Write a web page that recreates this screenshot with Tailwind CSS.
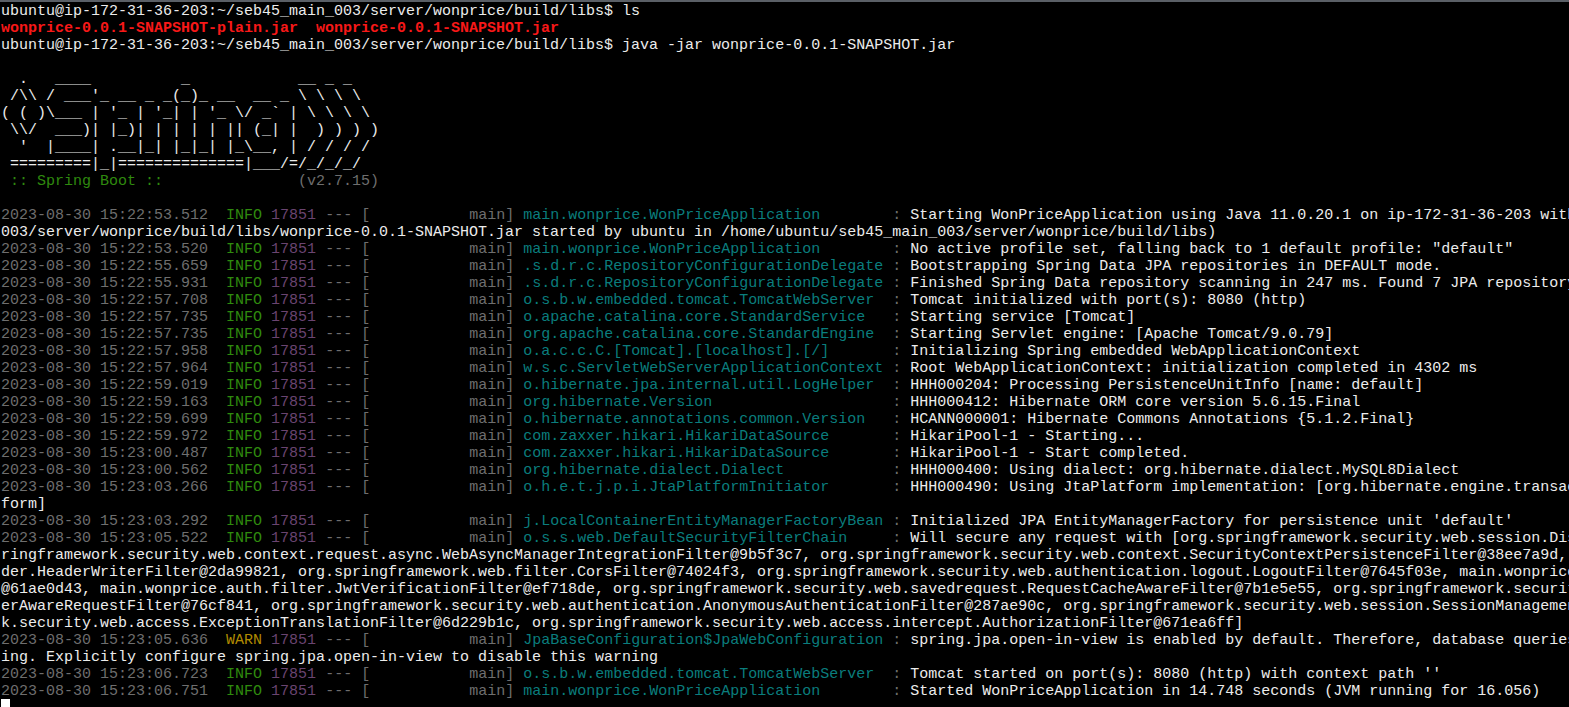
<!DOCTYPE html>
<html lang="en">
<head>
  <meta charset="UTF-8" />
  <title>ubuntu@ip-172-31-36-203</title>
  <script src="https://cdn.jsdelivr.net/npm/@tailwindcss/browser@4"></script>
</head>
<body class="bg-black overflow-hidden">
  <div class="h-[707px] w-[1569px] overflow-hidden bg-black border-t-2 border-t-[#5a5f66] pt-px pl-px font-['Liberation_Mono',monospace] text-[15px] leading-[17px] text-[#ececec]">
    <!-- shell -->
    <div class="whitespace-pre">ubuntu@ip-172-31-36-203:~/seb45_main_003/server/wonprice/build/libs$ ls</div>
    <div class="whitespace-pre font-bold text-[#f81818]">wonprice-0.0.1-SNAPSHOT-plain.jar  wonprice-0.0.1-SNAPSHOT.jar</div>
    <div class="whitespace-pre">ubuntu@ip-172-31-36-203:~/seb45_main_003/server/wonprice/build/libs$ java -jar wonprice-0.0.1-SNAPSHOT.jar</div>
    <div class="whitespace-pre"> </div>

    <!-- spring banner -->
    <div class="whitespace-pre">  .   ____          _            __ _ _</div>
    <div class="whitespace-pre"> /\\ / ___'_ __ _ _(_)_ __  __ _ \ \ \ \</div>
    <div class="whitespace-pre">( ( )\___ | '_ | '_| | '_ \/ _` | \ \ \ \</div>
    <div class="whitespace-pre"> \\/  ___)| |_)| | | | | || (_| |  ) ) ) )</div>
    <div class="whitespace-pre">  '  |____| .__|_| |_|_| |_\__, | / / / /</div>
    <div class="whitespace-pre"> =========|_|==============|___/=/_/_/_/</div>
    <div class="whitespace-pre"><span class="text-[#2f8a0e]"> :: Spring Boot :: </span><span class="text-[#6e6e6e]">              (v2.7.15)</span></div>
    <div class="whitespace-pre"> </div>

    <!-- log -->
    <div class="whitespace-pre"><span class="text-[#6e6e6e]">2023-08-30 15:22:53.512</span>  <span class="text-[#2f8a0e]">INFO</span> <span class="text-[#6a4470]">17851</span> <span class="text-[#6e6e6e]">--- [           main]</span> <span class="text-[#0a7d7d]">main.wonprice.WonPriceApplication       </span> <span class="text-[#6e6e6e]">:</span> Starting WonPriceApplication using Java 11.0.20.1 on ip-172-31-36-203 with</div>
    <div class="whitespace-pre">003/server/wonprice/build/libs/wonprice-0.0.1-SNAPSHOT.jar started by ubuntu in /home/ubuntu/seb45_main_003/server/wonprice/build/libs)</div>
    <div class="whitespace-pre"><span class="text-[#6e6e6e]">2023-08-30 15:22:53.520</span>  <span class="text-[#2f8a0e]">INFO</span> <span class="text-[#6a4470]">17851</span> <span class="text-[#6e6e6e]">--- [           main]</span> <span class="text-[#0a7d7d]">main.wonprice.WonPriceApplication       </span> <span class="text-[#6e6e6e]">:</span> No active profile set, falling back to 1 default profile: "default"</div>
    <div class="whitespace-pre"><span class="text-[#6e6e6e]">2023-08-30 15:22:55.659</span>  <span class="text-[#2f8a0e]">INFO</span> <span class="text-[#6a4470]">17851</span> <span class="text-[#6e6e6e]">--- [           main]</span> <span class="text-[#0a7d7d]">.s.d.r.c.RepositoryConfigurationDelegate</span> <span class="text-[#6e6e6e]">:</span> Bootstrapping Spring Data JPA repositories in DEFAULT mode.</div>
    <div class="whitespace-pre"><span class="text-[#6e6e6e]">2023-08-30 15:22:55.931</span>  <span class="text-[#2f8a0e]">INFO</span> <span class="text-[#6a4470]">17851</span> <span class="text-[#6e6e6e]">--- [           main]</span> <span class="text-[#0a7d7d]">.s.d.r.c.RepositoryConfigurationDelegate</span> <span class="text-[#6e6e6e]">:</span> Finished Spring Data repository scanning in 247 ms. Found 7 JPA repository</div>
    <div class="whitespace-pre"><span class="text-[#6e6e6e]">2023-08-30 15:22:57.708</span>  <span class="text-[#2f8a0e]">INFO</span> <span class="text-[#6a4470]">17851</span> <span class="text-[#6e6e6e]">--- [           main]</span> <span class="text-[#0a7d7d]">o.s.b.w.embedded.tomcat.TomcatWebServer </span> <span class="text-[#6e6e6e]">:</span> Tomcat initialized with port(s): 8080 (http)</div>
    <div class="whitespace-pre"><span class="text-[#6e6e6e]">2023-08-30 15:22:57.735</span>  <span class="text-[#2f8a0e]">INFO</span> <span class="text-[#6a4470]">17851</span> <span class="text-[#6e6e6e]">--- [           main]</span> <span class="text-[#0a7d7d]">o.apache.catalina.core.StandardService  </span> <span class="text-[#6e6e6e]">:</span> Starting service [Tomcat]</div>
    <div class="whitespace-pre"><span class="text-[#6e6e6e]">2023-08-30 15:22:57.735</span>  <span class="text-[#2f8a0e]">INFO</span> <span class="text-[#6a4470]">17851</span> <span class="text-[#6e6e6e]">--- [           main]</span> <span class="text-[#0a7d7d]">org.apache.catalina.core.StandardEngine </span> <span class="text-[#6e6e6e]">:</span> Starting Servlet engine: [Apache Tomcat/9.0.79]</div>
    <div class="whitespace-pre"><span class="text-[#6e6e6e]">2023-08-30 15:22:57.958</span>  <span class="text-[#2f8a0e]">INFO</span> <span class="text-[#6a4470]">17851</span> <span class="text-[#6e6e6e]">--- [           main]</span> <span class="text-[#0a7d7d]">o.a.c.c.C.[Tomcat].[localhost].[/]      </span> <span class="text-[#6e6e6e]">:</span> Initializing Spring embedded WebApplicationContext</div>
    <div class="whitespace-pre"><span class="text-[#6e6e6e]">2023-08-30 15:22:57.964</span>  <span class="text-[#2f8a0e]">INFO</span> <span class="text-[#6a4470]">17851</span> <span class="text-[#6e6e6e]">--- [           main]</span> <span class="text-[#0a7d7d]">w.s.c.ServletWebServerApplicationContext</span> <span class="text-[#6e6e6e]">:</span> Root WebApplicationContext: initialization completed in 4302 ms</div>
    <div class="whitespace-pre"><span class="text-[#6e6e6e]">2023-08-30 15:22:59.019</span>  <span class="text-[#2f8a0e]">INFO</span> <span class="text-[#6a4470]">17851</span> <span class="text-[#6e6e6e]">--- [           main]</span> <span class="text-[#0a7d7d]">o.hibernate.jpa.internal.util.LogHelper </span> <span class="text-[#6e6e6e]">:</span> HHH000204: Processing PersistenceUnitInfo [name: default]</div>
    <div class="whitespace-pre"><span class="text-[#6e6e6e]">2023-08-30 15:22:59.163</span>  <span class="text-[#2f8a0e]">INFO</span> <span class="text-[#6a4470]">17851</span> <span class="text-[#6e6e6e]">--- [           main]</span> <span class="text-[#0a7d7d]">org.hibernate.Version                   </span> <span class="text-[#6e6e6e]">:</span> HHH000412: Hibernate ORM core version 5.6.15.Final</div>
    <div class="whitespace-pre"><span class="text-[#6e6e6e]">2023-08-30 15:22:59.699</span>  <span class="text-[#2f8a0e]">INFO</span> <span class="text-[#6a4470]">17851</span> <span class="text-[#6e6e6e]">--- [           main]</span> <span class="text-[#0a7d7d]">o.hibernate.annotations.common.Version  </span> <span class="text-[#6e6e6e]">:</span> HCANN000001: Hibernate Commons Annotations {5.1.2.Final}</div>
    <div class="whitespace-pre"><span class="text-[#6e6e6e]">2023-08-30 15:22:59.972</span>  <span class="text-[#2f8a0e]">INFO</span> <span class="text-[#6a4470]">17851</span> <span class="text-[#6e6e6e]">--- [           main]</span> <span class="text-[#0a7d7d]">com.zaxxer.hikari.HikariDataSource      </span> <span class="text-[#6e6e6e]">:</span> HikariPool-1 - Starting...</div>
    <div class="whitespace-pre"><span class="text-[#6e6e6e]">2023-08-30 15:23:00.487</span>  <span class="text-[#2f8a0e]">INFO</span> <span class="text-[#6a4470]">17851</span> <span class="text-[#6e6e6e]">--- [           main]</span> <span class="text-[#0a7d7d]">com.zaxxer.hikari.HikariDataSource      </span> <span class="text-[#6e6e6e]">:</span> HikariPool-1 - Start completed.</div>
    <div class="whitespace-pre"><span class="text-[#6e6e6e]">2023-08-30 15:23:00.562</span>  <span class="text-[#2f8a0e]">INFO</span> <span class="text-[#6a4470]">17851</span> <span class="text-[#6e6e6e]">--- [           main]</span> <span class="text-[#0a7d7d]">org.hibernate.dialect.Dialect           </span> <span class="text-[#6e6e6e]">:</span> HHH000400: Using dialect: org.hibernate.dialect.MySQL8Dialect</div>
    <div class="whitespace-pre"><span class="text-[#6e6e6e]">2023-08-30 15:23:03.266</span>  <span class="text-[#2f8a0e]">INFO</span> <span class="text-[#6a4470]">17851</span> <span class="text-[#6e6e6e]">--- [           main]</span> <span class="text-[#0a7d7d]">o.h.e.t.j.p.i.JtaPlatformInitiator      </span> <span class="text-[#6e6e6e]">:</span> HHH000490: Using JtaPlatform implementation: [org.hibernate.engine.transac</div>
    <div class="whitespace-pre">form]</div>
    <div class="whitespace-pre"><span class="text-[#6e6e6e]">2023-08-30 15:23:03.292</span>  <span class="text-[#2f8a0e]">INFO</span> <span class="text-[#6a4470]">17851</span> <span class="text-[#6e6e6e]">--- [           main]</span> <span class="text-[#0a7d7d]">j.LocalContainerEntityManagerFactoryBean</span> <span class="text-[#6e6e6e]">:</span> Initialized JPA EntityManagerFactory for persistence unit 'default'</div>
    <div class="whitespace-pre"><span class="text-[#6e6e6e]">2023-08-30 15:23:05.522</span>  <span class="text-[#2f8a0e]">INFO</span> <span class="text-[#6a4470]">17851</span> <span class="text-[#6e6e6e]">--- [           main]</span> <span class="text-[#0a7d7d]">o.s.s.web.DefaultSecurityFilterChain    </span> <span class="text-[#6e6e6e]">:</span> Will secure any request with [org.springframework.security.web.session.Dis</div>
    <div class="whitespace-pre">ringframework.security.web.context.request.async.WebAsyncManagerIntegrationFilter@9b5f3c7, org.springframework.security.web.context.SecurityContextPersistenceFilter@38ee7a9d,</div>
    <div class="whitespace-pre">der.HeaderWriterFilter@2da99821, org.springframework.web.filter.CorsFilter@74024f3, org.springframework.security.web.authentication.logout.LogoutFilter@7645f03e, main.wonprice</div>
    <div class="whitespace-pre">@61ae0d43, main.wonprice.auth.filter.JwtVerificationFilter@ef718de, org.springframework.security.web.savedrequest.RequestCacheAwareFilter@7b1e5e55, org.springframework.security</div>
    <div class="whitespace-pre">erAwareRequestFilter@76cf841, org.springframework.security.web.authentication.AnonymousAuthenticationFilter@287ae90c, org.springframework.security.web.session.SessionManagemen</div>
    <div class="whitespace-pre">k.security.web.access.ExceptionTranslationFilter@6d229b1c, org.springframework.security.web.access.intercept.AuthorizationFilter@671ea6ff]</div>
    <div class="whitespace-pre"><span class="text-[#6e6e6e]">2023-08-30 15:23:05.636</span>  <span class="text-[#b08a00]">WARN</span> <span class="text-[#6a4470]">17851</span> <span class="text-[#6e6e6e]">--- [           main]</span> <span class="text-[#0a7d7d]">JpaBaseConfiguration$JpaWebConfiguration</span> <span class="text-[#6e6e6e]">:</span> spring.jpa.open-in-view is enabled by default. Therefore, database queries</div>
    <div class="whitespace-pre">ing. Explicitly configure spring.jpa.open-in-view to disable this warning</div>
    <div class="whitespace-pre"><span class="text-[#6e6e6e]">2023-08-30 15:23:06.723</span>  <span class="text-[#2f8a0e]">INFO</span> <span class="text-[#6a4470]">17851</span> <span class="text-[#6e6e6e]">--- [           main]</span> <span class="text-[#0a7d7d]">o.s.b.w.embedded.tomcat.TomcatWebServer </span> <span class="text-[#6e6e6e]">:</span> Tomcat started on port(s): 8080 (http) with context path ''</div>
    <div class="whitespace-pre"><span class="text-[#6e6e6e]">2023-08-30 15:23:06.751</span>  <span class="text-[#2f8a0e]">INFO</span> <span class="text-[#6a4470]">17851</span> <span class="text-[#6e6e6e]">--- [           main]</span> <span class="text-[#0a7d7d]">main.wonprice.WonPriceApplication       </span> <span class="text-[#6e6e6e]">:</span> Started WonPriceApplication in 14.748 seconds (JVM running for 16.056)</div>
    <div class="-mt-px w-[9px] h-[17px] bg-white"></div>
  </div>
</body>
</html>
